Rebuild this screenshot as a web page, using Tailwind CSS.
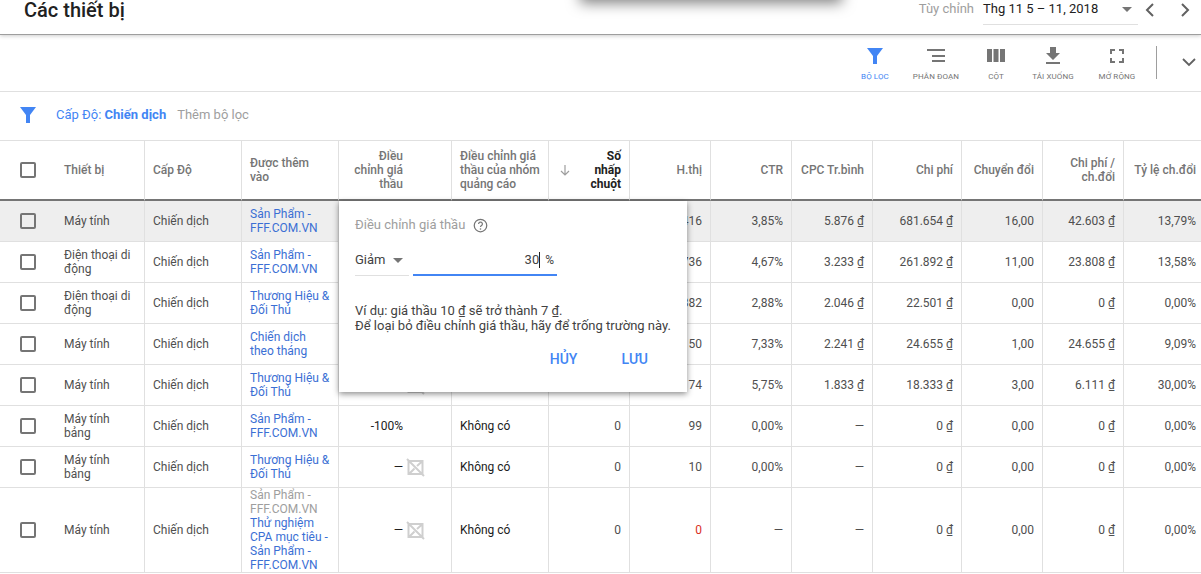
<!doctype html>
<html lang="vi"><head><meta charset="utf-8"><script src="https://cdn.jsdelivr.net/npm/@tailwindcss/browser@4"></script></head>
<body class="bg-white">
<div class="relative w-[1201px] h-[574px] overflow-hidden bg-white font-['Roboto',sans-serif] text-[12px] leading-[14px] text-[#4f4f4f]">

<div class="absolute left-[580px] top-[-20px] w-[262px] h-[20px] bg-white shadow-[0_3px_14px_rgba(0,0,0,0.5)]"></div>

<!-- top bar -->
<header class="h-[35px] border-b border-[#9e9e9e] shadow-[0_1px_4px_rgba(0,0,0,0.2)] flex items-start pl-[24px] relative">
  <h1 class="text-[20px] leading-[22px] font-medium text-[#212121] mt-[-1px]">Các thiết bị</h1>
  <div class="ml-auto flex items-start">
    <span class="text-[13px] leading-[16px] text-[#9e9e9e] mt-[1px]">Tùy chỉnh</span>
    <div class="ml-[9px] w-[155px] h-[25px] border-b border-[#e0e0e0] flex justify-between pt-[1px] text-[13px] leading-[16px] text-[#212121]">
      <span>Thg 11 5 – 11, 2018</span>
      <svg class="w-[10px] h-[5px] mt-[6px] mr-[6px]" viewBox="0 0 10 5"><path d="M0 0h10L5 5z" fill="#757575"/></svg>
    </div>
    <svg class="w-[24px] h-[24px] mt-[-2px]" viewBox="0 0 24 24"><path d="M15 6l-6 6 6 6" fill="none" stroke="#616161" stroke-width="2"/></svg>
    <svg class="w-[24px] h-[24px] ml-[11px] mr-[4px] mt-[-2px]" viewBox="0 0 24 24"><path d="M9 6l6 6-6 6" fill="none" stroke="#616161" stroke-width="2"/></svg>
  </div>
</header>

<!-- toolbar -->
<div class="h-[57px] border-b border-[#e0e0e0] flex items-start justify-end text-[8px] leading-[10px] text-[#757575] tracking-[0.1px]">
  <div class="flex flex-col items-center w-[52px] pt-[12px] text-[#4285f4]">
    <svg class="w-[18px] h-[18px]" viewBox="0 0 18 18"><path d="M1 1h16l-6 8v8H7V9z" fill="#4285f4"/></svg>
    <span class="mt-[7px]">BỘ LỌC</span>
  </div>
  <div class="flex flex-col items-center w-[70px] pt-[12px]">
    <svg class="w-[18px] h-[18px]" viewBox="0 0 18 18"><path d="M0 2h18v2H0zM5 8h13v2H5zM5 13h13v2H5z" fill="#757575"/></svg>
    <span class="mt-[7px]">PHÂN ĐOẠN</span>
  </div>
  <div class="flex flex-col items-center w-[50px] pt-[12px]">
    <svg class="w-[18px] h-[18px]" viewBox="0 0 18 18"><path d="M0 2h5v13H0zM6.500 2h5v13h-5zM13 2h5v13h-5z" fill="#757575"/></svg>
    <span class="mt-[7px]">CỘT</span>
  </div>
  <div class="flex flex-col items-center w-[64px] pt-[12px]">
    <svg class="w-[18px] h-[18px]" viewBox="0 0 18 18"><path d="M6 0h6v6h4l-7 7-7-7h4zM2 15h14v2H2z" fill="#757575"/></svg>
    <span class="mt-[7px]">TẢI XUỐNG</span>
  </div>
  <div class="flex flex-col items-center w-[60px] ml-[2px] pt-[12px]">
    <svg class="w-[18px] h-[18px]" viewBox="0 0 18 18"><path d="M2 2h5v2H4v3H2zM11 2h5v5h-2V4h-3zM2 11h2v3h3v2H2zM14 11h2v5h-5v-2h3z" fill="#757575"/></svg>
    <span class="mt-[7px]">MỞ RỘNG</span>
  </div>
  <div class="w-[1px] h-[33px] bg-[#9e9e9e] mt-[11px] ml-[9px]"></div>
  <svg class="w-[24px] h-[24px] mt-[16px] ml-[20px]" viewBox="0 0 24 24"><path d="M6 8l6 6 6-6" fill="none" stroke="#616161" stroke-width="1.800"/></svg>
</div>

<!-- filter row -->
<div class="h-[49px] border-b border-[#e0e0e0] flex items-center pl-[19px] pb-[2px] text-[13px] leading-[16px]">
  <svg class="w-[18px] h-[18px]" viewBox="0 0 18 18"><path d="M1 1h16l-6 8v8H7V9z" fill="#4285f4"/></svg>
  <span class="ml-[19px] text-[#4285f4]">Cấp Độ: <b class="font-bold">Chiến dịch</b></span>
  <span class="ml-[11px] text-[#9e9e9e]">Thêm bộ lọc</span>
</div>

<!-- table -->
<table class="table-fixed border-separate border-spacing-0 w-[1201px]">
  <colgroup>
    <col class="w-[145px]"><col class="w-[97px]"><col class="w-[97px]"><col class="w-[113px]"><col class="w-[97px]"><col class="w-[81px]"><col class="w-[81px]"><col class="w-[81px]"><col class="w-[81px]"><col class="w-[89px]"><col class="w-[81px]"><col class="w-[81px]"><col class="w-[77px]">
  </colgroup>
  <thead>
    <tr class="h-[60px] text-[#757575] font-medium">
      <th class="border-r border-b-2 border-r-[#e0e0e0] border-b-[#757575] font-medium text-left p-0"><div class="flex items-center"><span class="ml-[20px] w-[16px] h-[16px] border-2 border-[#757575] rounded-[2px]"></span><span class="ml-[28px]">Thiết bị</span></div></th>
      <th class="border-r border-b-2 border-r-[#e0e0e0] border-b-[#757575] font-medium text-left pl-[8px] pr-[8px]">Cấp Độ</th>
      <th class="border-r border-b-2 border-r-[#e0e0e0] border-b-[#757575] font-medium text-left pl-[8px] pr-[8px]">Được thêm vào</th>
      <th class="border-r border-b-2 border-r-[#e0e0e0] border-b-[#757575] font-medium text-right pr-[48px]">Điều<br>chỉnh giá<br>thầu</th>
      <th class="border-r border-b-2 border-r-[#e0e0e0] border-b-[#757575] font-medium text-left pl-[8px] pr-[4px]">Điều chỉnh giá thầu của nhóm quảng cáo</th>
      <th class="border-r border-b-2 border-r-[#e0e0e0] border-b-[#757575] font-bold text-right pr-[8px] text-[#212121]"><div class="flex items-center justify-between pl-[10px]"><svg class="w-[12px] h-[12px]" viewBox="0 0 12 12"><path d="M6 1v10M2 7l4 4 4-4" fill="none" stroke="#9e9e9e" stroke-width="1.200"/></svg><span>Số<br>nhấp<br>chuột</span></div></th>
      <th class="border-r border-b-2 border-r-[#e0e0e0] border-b-[#757575] font-medium text-right pr-[8px]">H.thị</th>
      <th class="border-r border-b-2 border-r-[#e0e0e0] border-b-[#757575] font-medium text-right pr-[8px]">CTR</th>
      <th class="border-r border-b-2 border-r-[#e0e0e0] border-b-[#757575] font-medium text-right pr-[8px]">CPC Tr.bình</th>
      <th class="border-r border-b-2 border-r-[#e0e0e0] border-b-[#757575] font-medium text-right pr-[8px]">Chi phí</th>
      <th class="border-r border-b-2 border-r-[#e0e0e0] border-b-[#757575] font-medium text-right pr-[8px]">Chuyển đổi</th>
      <th class="border-r border-b-2 border-r-[#e0e0e0] border-b-[#757575] font-medium text-right pr-[8px]">Chi phí /<br>ch.đổi</th>
      <th class="border-b-2 border-b-[#757575] font-medium text-right pr-[5px]">Tỷ lệ ch.đổi</th>
    </tr>
  </thead>
  <tbody class="[&_td]:border-b [&_td]:border-[#e0e0e0] [&_td:not(:last-child)]:border-r [&_td]:px-[8px] [&_td]:text-right [&_td:nth-child(-n+3)]:text-left [&_td:nth-child(5)]:text-left [&_td:nth-child(4)]:text-[#212121] [&_td:nth-child(5)]:text-[#212121] [&_td:first-child]:p-0 [&_td:nth-child(4)]:pr-[26px] [&_td:last-child]:pr-[5px] [&_tr]:h-[41px]">
    <tr class="bg-[#eeeeee]">
      <td><div class="flex items-center"><span class="shrink-0 ml-[20px] w-[16px] h-[16px] border-2 border-[#757575] rounded-[2px]"></span><span class="ml-[28px] w-[72px]">Máy tính</span></div></td>
      <td>Chiến dịch</td><td class="text-[#3b6fd4]">Sản Phẩm - FFF.COM.VN</td><td>—</td><td>Không có</td><td>16</td><td>416</td><td>3,85%</td><td>5.876 ₫</td><td>681.654 ₫</td><td>16,00</td><td>42.603 ₫</td><td>13,79%</td>
    </tr>
    <tr>
      <td><div class="flex items-center"><span class="shrink-0 ml-[20px] w-[16px] h-[16px] border-2 border-[#757575] rounded-[2px]"></span><span class="ml-[28px] w-[72px]">Điện thoại di động</span></div></td>
      <td>Chiến dịch</td><td class="text-[#3b6fd4]">Sản Phẩm - FFF.COM.VN</td><td>—</td><td>Không có</td><td>11</td><td>736</td><td>4,67%</td><td>3.233 ₫</td><td>261.892 ₫</td><td>11,00</td><td>23.808 ₫</td><td>13,58%</td>
    </tr>
    <tr>
      <td><div class="flex items-center"><span class="shrink-0 ml-[20px] w-[16px] h-[16px] border-2 border-[#757575] rounded-[2px]"></span><span class="ml-[28px] w-[72px]">Điện thoại di động</span></div></td>
      <td>Chiến dịch</td><td class="text-[#3b6fd4]">Thương Hiệu &amp; Đối Thủ</td><td>—</td><td>Không có</td><td>11</td><td>382</td><td>2,88%</td><td>2.046 ₫</td><td>22.501 ₫</td><td>0,00</td><td>0 ₫</td><td>0,00%</td>
    </tr>
    <tr>
      <td><div class="flex items-center"><span class="shrink-0 ml-[20px] w-[16px] h-[16px] border-2 border-[#757575] rounded-[2px]"></span><span class="ml-[28px] w-[72px]">Máy tính</span></div></td>
      <td>Chiến dịch</td><td class="text-[#3b6fd4]">Chiến dịch theo tháng</td><td>—</td><td>Không có</td><td>11</td><td>150</td><td>7,33%</td><td>2.241 ₫</td><td>24.655 ₫</td><td>1,00</td><td>24.655 ₫</td><td>9,09%</td>
    </tr>
    <tr>
      <td><div class="flex items-center"><span class="shrink-0 ml-[20px] w-[16px] h-[16px] border-2 border-[#757575] rounded-[2px]"></span><span class="ml-[28px] w-[72px]">Máy tính</span></div></td>
      <td>Chiến dịch</td><td class="text-[#3b6fd4]">Thương Hiệu &amp; Đối Thủ</td><td><div class="flex items-center justify-end gap-[3px]">— <svg class="w-[19px] h-[19px]" viewBox="0 0 19 19"><path d="M2.500 3h14v13h-14zM1 1l17 17M3 16l5.500-5.500M11 8l5.500-5" fill="none" stroke="#cfcfcf" stroke-width="2"/></svg></div></td><td>Không có</td><td>10</td><td>174</td><td>5,75%</td><td>1.833 ₫</td><td>18.333 ₫</td><td>3,00</td><td>6.111 ₫</td><td>30,00%</td>
    </tr>
    <tr>
      <td><div class="flex items-center"><span class="shrink-0 ml-[20px] w-[16px] h-[16px] border-2 border-[#757575] rounded-[2px]"></span><span class="ml-[28px] w-[72px]">Máy tính bảng</span></div></td>
      <td>Chiến dịch</td><td class="text-[#3b6fd4]">Sản Phẩm - FFF.COM.VN</td><td class="!pr-[48px]">-100%</td><td>Không có</td><td>0</td><td>99</td><td>0,00%</td><td>—</td><td>0 ₫</td><td>0,00</td><td>0 ₫</td><td>0,00%</td>
    </tr>
    <tr>
      <td><div class="flex items-center"><span class="shrink-0 ml-[20px] w-[16px] h-[16px] border-2 border-[#757575] rounded-[2px]"></span><span class="ml-[28px] w-[72px]">Máy tính bảng</span></div></td>
      <td>Chiến dịch</td><td class="text-[#3b6fd4]">Thương Hiệu &amp; Đối Thủ</td><td><div class="flex items-center justify-end gap-[3px]">— <svg class="w-[19px] h-[19px]" viewBox="0 0 19 19"><path d="M2.500 3h14v13h-14zM1 1l17 17M3 16l5.500-5.500M11 8l5.500-5" fill="none" stroke="#cfcfcf" stroke-width="2"/></svg></div></td><td>Không có</td><td>0</td><td>10</td><td>0,00%</td><td>—</td><td>0 ₫</td><td>0,00</td><td>0 ₫</td><td>0,00%</td>
    </tr>
    <tr class="!h-[85px]">
      <td><div class="flex items-center"><span class="shrink-0 ml-[20px] w-[16px] h-[16px] border-2 border-[#757575] rounded-[2px]"></span><span class="ml-[28px] w-[72px]">Máy tính</span></div></td>
      <td>Chiến dịch</td><td class="text-[#3b6fd4]"><span class="text-[#9e9e9e]">Sản Phẩm - FFF.COM.VN</span><br>Thử nghiệm CPA mục tiêu - Sản Phẩm - FFF.COM.VN</td><td><div class="flex items-center justify-end gap-[3px]">— <svg class="w-[19px] h-[19px]" viewBox="0 0 19 19"><path d="M2.500 3h14v13h-14zM1 1l17 17M3 16l5.500-5.500M11 8l5.500-5" fill="none" stroke="#cfcfcf" stroke-width="2"/></svg></div></td><td>Không có</td><td>0</td><td class="text-[#d93025]">0</td><td>—</td><td>—</td><td>0 ₫</td><td>0,00</td><td>0 ₫</td><td>0,00%</td>
    </tr>
  </tbody>
</table>

<!-- dialog -->
<div class="absolute left-[339px] top-[201px] w-[348px] h-[191px] bg-white shadow-[0_2px_6px_rgba(0,0,0,0.45)] px-[16px] pt-[16px]">
  <div class="flex items-center text-[13px] leading-[16px] text-[#9e9e9e]">Điều chỉnh giá thầu
    <svg class="w-[15px] h-[15px] ml-[8px]" viewBox="0 0 24 24"><circle cx="12" cy="12" r="10" fill="none" stroke="#757575" stroke-width="2"/><path d="M9 9.500a3 3 0 1 1 4.500 2.600c-1 .6-1.500 1.200-1.500 2.400" fill="none" stroke="#757575" stroke-width="2"/><circle cx="12" cy="17.500" r="1.300" fill="#757575"/></svg>
  </div>
  <div class="flex items-end mt-[11px] h-[32px] text-[13px] leading-[16px]">
    <div class="w-[54px] h-[32px] border-b border-[#e0e0e0] flex items-start pt-[8px] text-[#424242]">Giảm<svg class="w-[10px] h-[5px] ml-[7px] mt-[6px]" viewBox="0 0 10 5"><path d="M0 0h10L5 5z" fill="#757575"/></svg></div>
    <div class="ml-[4px] w-[144px] h-[32px] border-b-2 border-[#4285f4] flex items-start justify-end pt-[8px] text-[#424242]"><span class="border-r border-[#212121]">30</span><span class="ml-[5px] mr-[3px] text-[12px]">%</span></div>
  </div>
  <p class="mt-[27px] text-[#424242] text-[13px] leading-[15px] whitespace-nowrap">Ví dụ: giá thầu 10 ₫ sẽ trở thành 7 ₫.<br>Để loại bỏ điều chỉnh giá thầu, hãy để trống trường này.</p>
  <div class="flex justify-end mt-[18px] text-[14px] leading-[16px] font-medium text-[#4285f4] pr-[23px] gap-[44px]"><span>HỦY</span><span>LƯU</span></div>
</div>
</div>
</body></html>
